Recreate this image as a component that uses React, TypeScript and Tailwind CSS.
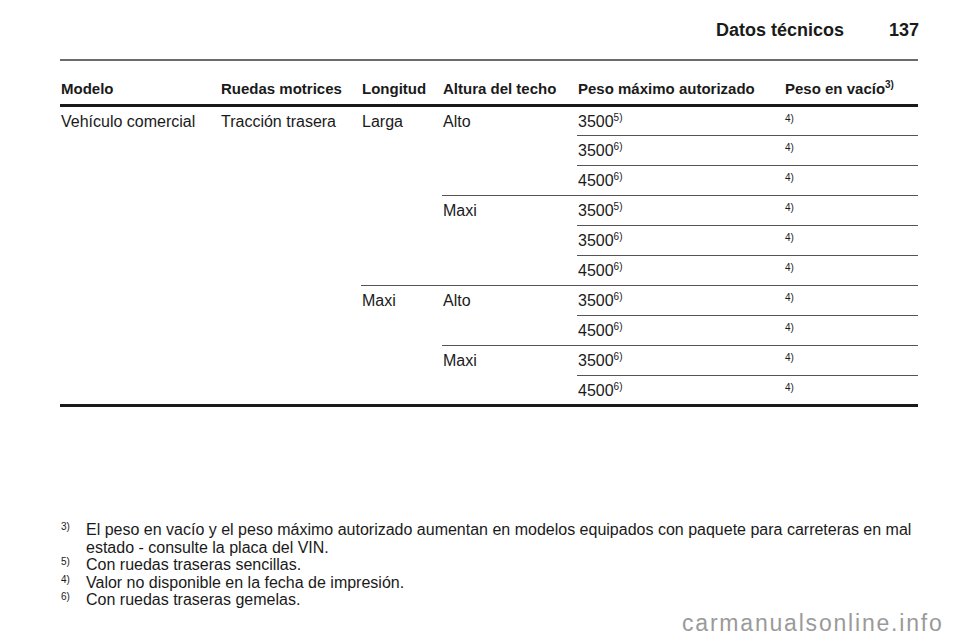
import React from 'react';

type Row = {
  modelo?: { text: string; span: number };
  ruedas?: { text: string; span: number };
  longitud?: { text: string; span: number };
  altura?: { text: string; span: number };
  peso: string;
  nota: string;
};

const rows: Row[] = [
  { modelo: { text: 'Vehículo comercial', span: 10 }, ruedas: { text: 'Tracción trasera', span: 10 }, longitud: { text: 'Larga', span: 6 }, altura: { text: 'Alto', span: 3 }, peso: '3500', nota: '5)' },
  { peso: '3500', nota: '6)' },
  { peso: '4500', nota: '6)' },
  { altura: { text: 'Maxi', span: 3 }, peso: '3500', nota: '5)' },
  { peso: '3500', nota: '6)' },
  { peso: '4500', nota: '6)' },
  { longitud: { text: 'Maxi', span: 4 }, altura: { text: 'Alto', span: 2 }, peso: '3500', nota: '6)' },
  { peso: '4500', nota: '6)' },
  { altura: { text: 'Maxi', span: 2 }, peso: '3500', nota: '6)' },
  { peso: '4500', nota: '6)' },
];

const footnotes = [
  { n: '3)', text: 'El peso en vacío y el peso máximo autorizado aumentan en modelos equipados con paquete para carreteras en mal estado - consulte la placa del VIN.' },
  { n: '5)', text: 'Con ruedas traseras sencillas.' },
  { n: '4)', text: 'Valor no disponible en la fecha de impresión.' },
  { n: '6)', text: 'Con ruedas traseras gemelas.' },
];

function Sup({ children }: { children: React.ReactNode }) {
  return <sup className="text-[10px] -top-[6px]">{children}</sup>;
}

export default function App() {
  const last = rows.length - 1;
  // group cells close with a thin rule, the table closes with a heavy one
  const cellBorder = (endRow: number) =>
    endRow === last ? 'border-b-[3px] border-[#1a1a1a]' : 'border-b border-[#555]';
  const td = 'align-top pt-[6px] pl-[1px] leading-[18px]';

  return (
    <div className="w-[960px] h-[642px] bg-white text-[#1a1a1a] relative overflow-hidden" style={{ fontFamily: '"Liberation Sans", Arial, sans-serif' }}>
      <div className="pl-[60px] pr-[42px]">
        <div className="flex justify-end items-center h-[61px] pt-[2px] border-b-2 border-[#6b6b6b]">
          <span className="text-[18px] font-bold">Datos técnicos</span>
          <span className="text-[18px] font-bold ml-[45px] -mr-[1px]">137</span>
        </div>

        <table className="w-[858px] border-collapse text-[16px] table-fixed">
          <colgroup>
            <col className="w-[160px]" />
            <col className="w-[141px]" />
            <col className="w-[81px]" />
            <col className="w-[135px]" />
            <col className="w-[207px]" />
            <col className="w-[134px]" />
          </colgroup>
          <thead>
            <tr className="border-b-[3px] border-[#1a1a1a]">
              {['Modelo', 'Ruedas motrices', 'Longitud', 'Altura del techo', 'Peso máximo autorizado'].map((h) => (
                <th key={h} className="text-left text-[15px] font-bold leading-[18px] pt-[19px] pb-[6px] pl-[1px] whitespace-nowrap">{h}</th>
              ))}
              <th className="text-left text-[15px] font-bold leading-[18px] pt-[19px] pb-[6px] pl-[1px] whitespace-nowrap">
                Peso en vacío<Sup>3)</Sup>
              </th>
            </tr>
          </thead>
          <tbody>
            {rows.map((r, i) => (
              <tr key={i} className="h-[30px]">
                {r.modelo && (
                  <td rowSpan={r.modelo.span} className={`${td} ${cellBorder(i + r.modelo.span - 1)}`}>{r.modelo.text}</td>
                )}
                {r.ruedas && (
                  <td rowSpan={r.ruedas.span} className={`${td} ${cellBorder(i + r.ruedas.span - 1)}`}>{r.ruedas.text}</td>
                )}
                {r.longitud && (
                  <td rowSpan={r.longitud.span} className={`${td} ${cellBorder(i + r.longitud.span - 1)}`}>{r.longitud.text}</td>
                )}
                {r.altura && (
                  <td rowSpan={r.altura.span} className={`${td} ${cellBorder(i + r.altura.span - 1)}`}>{r.altura.text}</td>
                )}
                <td className={`${td} ${cellBorder(i)}`}>
                  {r.peso}<Sup>{r.nota}</Sup>
                </td>
                <td className={`align-top pt-[6px] pl-[1px] text-[10px] leading-[12px] ${cellBorder(i)}`}>4)</td>
              </tr>
            ))}
          </tbody>
        </table>

        <div className="mt-[114px] text-[16px] leading-[17.5px]">
          {footnotes.map((f) => (
            <div key={f.n} className="flex">
              <span className="w-[26px] shrink-0 text-[10px] leading-[12px] pl-[1px]">{f.n}</span>
              <span>{f.text}</span>
            </div>
          ))}
        </div>
      </div>

      <div className="absolute left-[682px] top-[609px] text-[23px] leading-[28px] text-[#9a9a9a] tracking-[1.8px]">
        carmanualsonline.info
      </div>
    </div>
  );
}
